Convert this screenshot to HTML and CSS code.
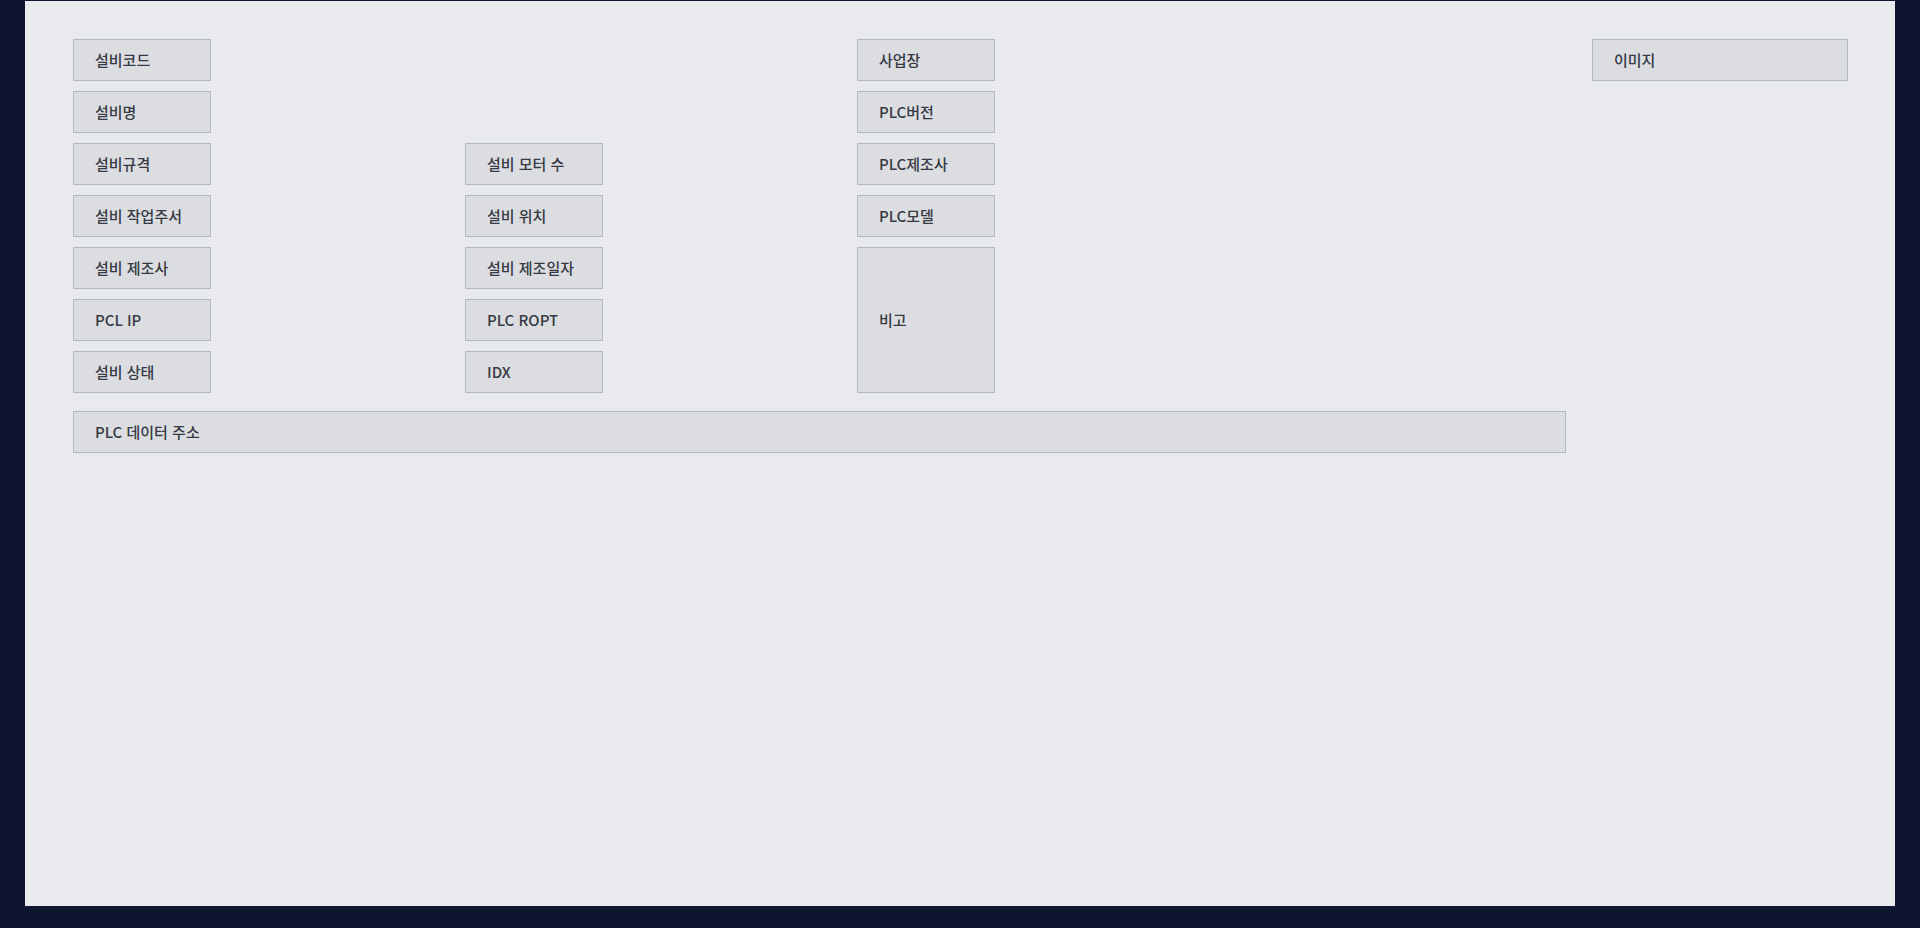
FILE: index.html
```html
<!DOCTYPE html>
<html lang="ko">
<head>
<meta charset="utf-8">
<title>설비</title>
<link rel="stylesheet" href="styles.css">
</head>
<body>
<div class="panel">
  <div class="form">
    <div class="fields">
      <div class="label c1 r1">설비코드</div>
      <div class="label c3 r1">사업장</div>
      <div class="label c1 r2">설비명</div>
      <div class="label c3 r2">PLC버전</div>
      <div class="label c1 r3">설비규격</div>
      <div class="label c2 r3">설비 모터 수</div>
      <div class="label c3 r3">PLC제조사</div>
      <div class="label c1 r4">설비 작업주서</div>
      <div class="label c2 r4">설비 위치</div>
      <div class="label c3 r4">PLC모델</div>
      <div class="label c1 r5">설비 제조사</div>
      <div class="label c2 r5">설비 제조일자</div>
      <div class="label c3 r5 tall">비고</div>
      <div class="label c1 r6">PCL IP</div>
      <div class="label c2 r6">PLC ROPT</div>
      <div class="label c1 r7">설비 상태</div>
      <div class="label c2 r7">IDX</div>
      <div class="label wide">PLC 데이터 주소</div>
    </div>
    <div class="side">
      <div class="label image">이미지</div>
    </div>
  </div>
</div>
</body>
</html>
```
FILE: styles.css
```css
html, body {
  margin: 0;
  padding: 0;
  background: #0d152f;
  font-family: "Noto Sans CJK KR", "Noto Sans", sans-serif;
}

.panel {
  margin-left: 25px;
  margin-top: 1px;
  width: 1870px;
  height: 905px;
  background: #e9eaee;
  box-sizing: border-box;
  padding: 38px 47px 0 48px;
}

.form {
  display: flex;
  align-items: flex-start;
}

.fields {
  width: 1493px;
  display: grid;
  grid-template-columns: 138px 138px 138px 1fr;
  grid-template-rows: repeat(7, 42px) 42px;
  column-gap: 254px;
  row-gap: 10px;
}

.side {
  margin-left: 26px;
  width: 256px;
}

.label {
  box-sizing: border-box;
  height: 42px;
  border: 1px solid #b4b9bc;
  background: #dcdde1;
  color: #353a44;
  font-size: 15px;
  font-weight: 500;
  display: flex;
  align-items: center;
  padding-left: 21px;
  padding-bottom: 2px;
  white-space: nowrap;
}

.c1 { grid-column: 1; }
.c2 { grid-column: 2; }
.c3 { grid-column: 3; }
.r1 { grid-row: 1; }
.r2 { grid-row: 2; }
.r3 { grid-row: 3; }
.r4 { grid-row: 4; }
.r5 { grid-row: 5; }
.r6 { grid-row: 6; }
.r7 { grid-row: 7; }

.tall {
  grid-row: 5 / span 3;
  height: auto;
}

.wide {
  grid-column: 1 / -1;
  grid-row: 8;
  margin-top: 8px;
}

.image {
  width: 256px;
}
```
